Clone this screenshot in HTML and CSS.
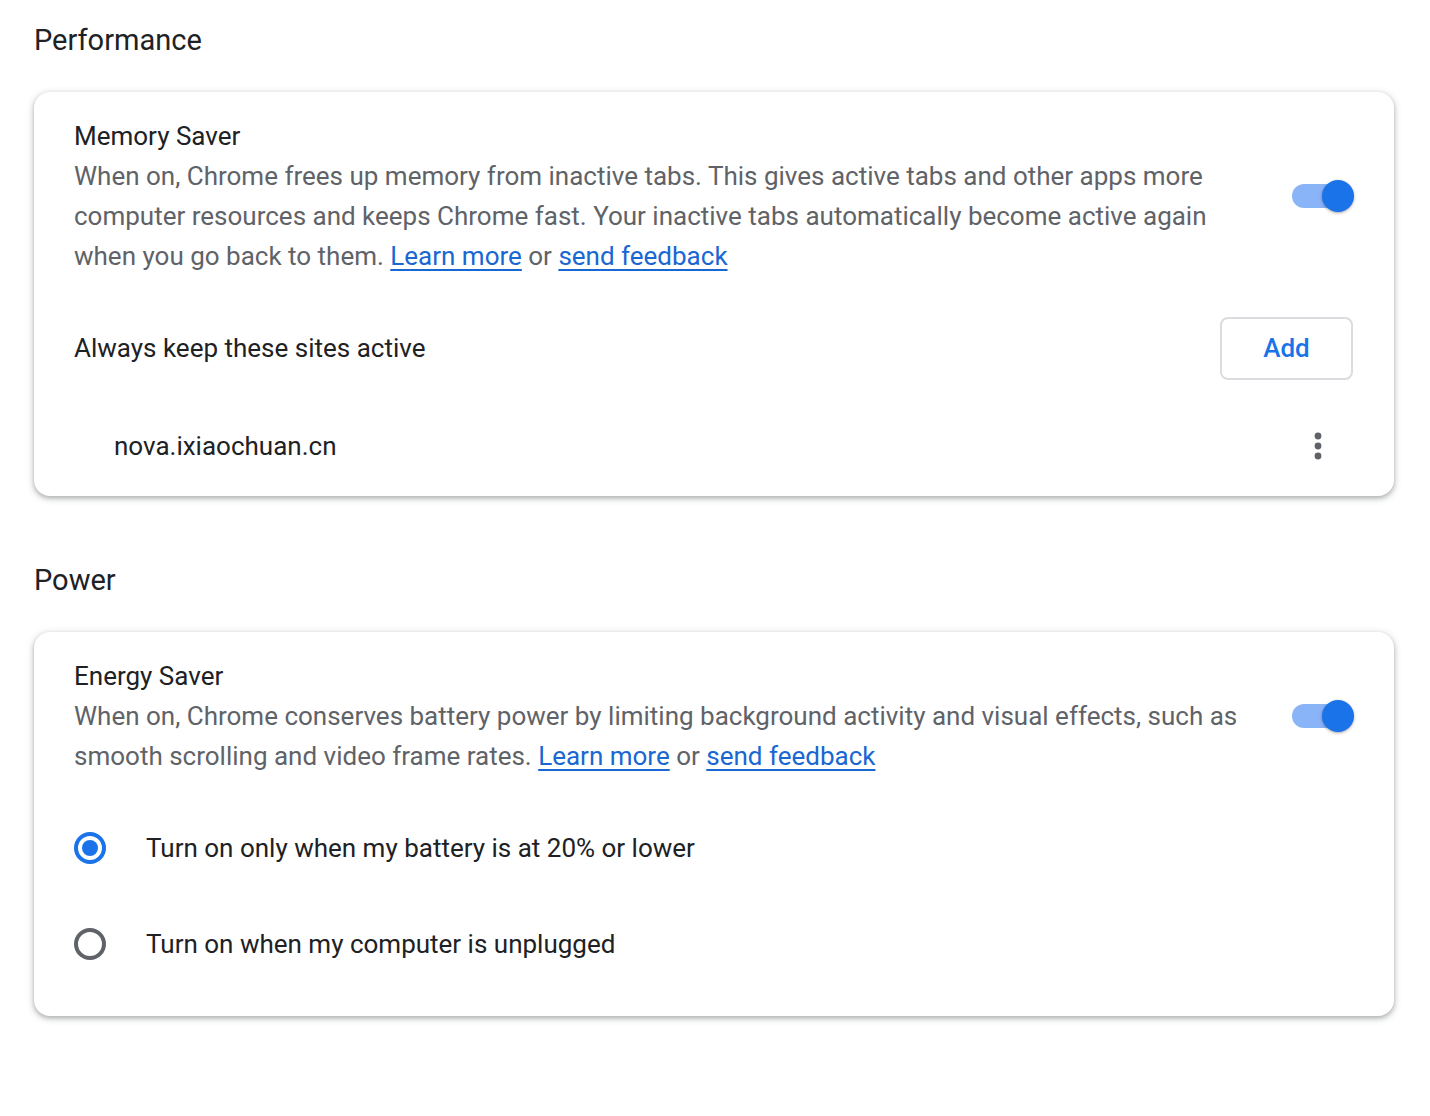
FILE: index.html
```html
<!DOCTYPE html>
<html>
<head>
<meta charset="utf-8">
<link rel="stylesheet" href="styles.css">
</head>
<body>
<main class="page">
  <h2 class="section-title first">Performance</h2>
  <section class="card">
    <div class="row toggle-row">
      <div class="row-text">
        <div class="row-label">Memory Saver</div>
        <div class="row-sub">When on, Chrome frees up memory from inactive tabs. This gives active tabs and other apps more computer resources and keeps Chrome fast. Your inactive tabs automatically become active again when you go back to them. <a href="#" class="link">Learn more</a> or <a href="#" class="link">send feedback</a></div>
      </div>
      <div class="toggle"><span class="toggle-bar"></span><span class="toggle-knob"></span></div>
    </div>
    <div class="row sites-row">
      <div class="row-label">Always keep these sites active</div>
      <button class="add-btn">Add</button>
    </div>
    <div class="row site-entry">
      <div class="site-name">nova.ixiaochuan.cn</div>
      <button class="icon-btn" aria-label="More actions">
        <svg width="12" height="30" viewBox="0 0 12 30"><circle cx="6" cy="4" r="3.4" fill="#5f6368"/><circle cx="6" cy="14" r="3.4" fill="#5f6368"/><circle cx="6" cy="24" r="3.4" fill="#5f6368"/></svg>
      </button>
    </div>
  </section>

  <h2 class="section-title">Power</h2>
  <section class="card card-power">
    <div class="row toggle-row">
      <div class="row-text">
        <div class="row-label">Energy Saver</div>
        <div class="row-sub">When on, Chrome conserves battery power by limiting background activity and visual effects, such as smooth scrolling and video frame rates. <a href="#" class="link">Learn more</a> or <a href="#" class="link">send feedback</a></div>
      </div>
      <div class="toggle top"><span class="toggle-bar"></span><span class="toggle-knob"></span></div>
    </div>
    <div class="row radio-row">
      <span class="radio checked"><span class="radio-dot"></span></span>
      <span class="radio-label">Turn on only when my battery is at 20% or lower</span>
    </div>
    <div class="row radio-row">
      <span class="radio"></span>
      <span class="radio-label">Turn on when my computer is unplugged</span>
    </div>
  </section>
</main>
</body>
</html>
```

FILE: styles.css
```css
* { box-sizing: border-box; }
html, body { margin: 0; padding: 0; background: #fff; }
body {
  font-family: Roboto, "Noto Sans", "Liberation Sans", sans-serif;
  color: #202124;
  font-size: 26px;
  line-height: 40px;
}
.page {
  padding: 20px 36px 60px 34px;
}
.section-title {
  margin: 64px 0 32px 0;
  font-size: 29px;
  font-weight: 400;
  line-height: 40px;
  color: #202124;
}
.section-title.first { margin-top: 0; }
.card {
  background: #fff;
  border-radius: 16px;
  box-shadow: 0 2px 4px 0 rgba(60,64,67,.3), 0 2px 6px 2px rgba(60,64,67,.15);
  padding: 0 40px 0 40px;
}
.card-power { padding-bottom: 24px; }
.row {
  display: flex;
  align-items: center;
}
.toggle-row {
  padding: 24px 0 24px 0;
  align-items: center;
  gap: 40px;
}
.row-text { flex: 1; }
.row-label { color: #202124; }
.row-sub { color: #5f6368; }
.link { color: #1967d2; text-decoration: underline; text-underline-offset: 4px; text-decoration-thickness: 2px; }
.toggle {
  position: relative;
  width: 62px;
  height: 32px;
  flex: none;
}
.toggle.top { align-self: flex-start; margin-top: 44px; }
.toggle-bar {
  position: absolute;
  left: 0;
  top: 4px;
  width: 58px;
  height: 24px;
  border-radius: 12px;
  background: #8ab4f8;
}
.toggle-knob {
  position: absolute;
  right: 0;
  top: 0;
  width: 32px;
  height: 32px;
  border-radius: 50%;
  background: #1a73e8;
  box-shadow: 0 1px 3px rgba(0,0,0,.35);
}
.sites-row {
  height: 96px;
  justify-content: space-between;
}
.add-btn {
  width: 133px;
  height: 63px;
  border: 2px solid #dadce0;
  border-radius: 8px;
  background: #fff;
  color: #1a73e8;
  font-family: Roboto, "Noto Sans", "Liberation Sans", sans-serif;
  font-size: 26px;
  font-weight: 500;
  padding: 0;
  margin-right: 1px;
}
.site-entry {
  height: 100px;
  justify-content: space-between;
  padding-left: 40px;
}
.icon-btn {
  width: 72px;
  height: 72px;
  border: none;
  background: transparent;
  padding: 0;
  display: flex;
  align-items: center;
  justify-content: center;
  margin-right: 0;
}
.icon-btn svg { margin-top: 2px; }
.radio-row {
  height: 96px;
  gap: 40px;
}
.radio {
  width: 32px;
  height: 32px;
  border-radius: 50%;
  border: 4px solid #5f6368;
  flex: none;
  display: flex;
  align-items: center;
  justify-content: center;
}
.radio.checked { border-color: #1a73e8; }
.radio-dot {
  width: 16px;
  height: 16px;
  border-radius: 50%;
  background: #1a73e8;
}
.radio-label { color: #202124; }
```
